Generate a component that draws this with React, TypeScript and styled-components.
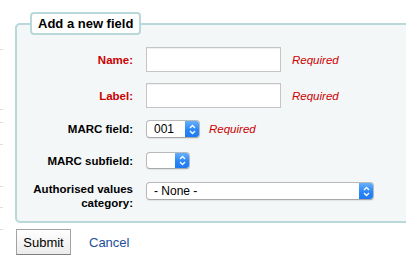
import React from "react";
import styled, { createGlobalStyle } from "styled-components";

const Global = createGlobalStyle`
  html, body { margin: 0; padding: 0; background: #fff; overflow: hidden; }
  body { font-family: "Liberation Sans", Arial, sans-serif; color: #000; }
  * { box-sizing: border-box; }
`;

const Page = styled.div`
  display: flex;
  width: 406px;
  height: 267px;
  overflow: hidden;
`;

const Rail = styled.div`
  width: 3px;
  flex: none;
  display: flex;
  flex-direction: column;
`;

const RailItem = styled.div<{ $h: number }>`
  height: ${(p) => p.$h}px;
  border-bottom: 1px solid #dedede;
  flex: none;
`;

const Main = styled.div`
  padding-left: 12px;
  flex: none;
`;

const Fieldset = styled.fieldset`
  margin: 12px 0 0 0;
  width: 430px;
  padding: 0 0 11px 13px;
  border: 2px solid #b9d8d9;
  border-radius: 5px;
  background: #f3f7f8;
  min-inline-size: 0;
`;

const Legend = styled.legend`
  padding: 2px 6px;
  margin: 0;
  border: 2px solid #b9d8d9;
  border-radius: 4px;
  background: #fff;
  font-size: 13px;
  line-height: 15px;
  font-weight: bold;
  color: #000;
`;

const Rows = styled.div`
  display: flex;
  flex-direction: column;
  padding-top: 12px;
`;

const Row = styled.div<{ $top: number; $align?: string }>`
  display: flex;
  align-items: ${(p) => p.$align || "center"};
  margin-top: ${(p) => p.$top}px;
`;

const Label = styled.label<{ $req?: boolean }>`
  width: 103px;
  margin-right: 13px;
  flex: none;
  text-align: right;
  font-size: 11.5px;
  line-height: 14px;
  font-weight: bold;
  color: ${(p) => (p.$req ? "#cc0000" : "#000")};
`;

const TextInput = styled.input`
  width: 135px;
  height: 25px;
  border: 1px solid #c5c5c5;
  background: #fff;
  box-shadow: inset 0 1px 1px rgba(0, 0, 0, 0.06);
  padding: 2px 4px;
  font: 12px "Liberation Sans", Arial, sans-serif;
  margin: 0;
`;

const Required = styled.span<{ $ml: number }>`
  margin-left: ${(p) => p.$ml}px;
  font-size: 11.5px;
  font-style: italic;
  color: #cc0000;
`;

const SelectBox = styled.div<{ $w: number; $h: number }>`
  width: ${(p) => p.$w}px;
  height: ${(p) => p.$h}px;
  display: flex;
  border: 1px solid #b9b9b9;
  border-bottom-color: #a8a8a8;
  border-radius: 4px;
  background: #fff;
  box-shadow: 0 1px 1px rgba(0, 0, 0, 0.08);
  overflow: hidden;
`;

const SelectText = styled.span`
  flex: 1;
  padding-left: 7px;
  font-size: 12px;
  line-height: 16px;
  color: #000;
  white-space: nowrap;
`;

const SelectArrow = styled.span`
  width: 15px;
  flex: none;
  display: flex;
  align-items: center;
  justify-content: center;
  background: linear-gradient(#6db5fb, #2a86f7 55%, #1b78f2);
  margin: -1px -1px -1px 0;
`;

const Chevrons = () => (
  <svg width="7" height="11" viewBox="0 0 7 11">
    <path d="M1 4 L3.5 1.5 L6 4" fill="none" stroke="#fff" strokeWidth="1.3" />
    <path d="M1 7 L3.5 9.5 L6 7" fill="none" stroke="#fff" strokeWidth="1.3" />
  </svg>
);

const Select = ({ w, h, text }: { w: number; h: number; text: string }) => (
  <SelectBox $w={w} $h={h}>
    <SelectText>{text}</SelectText>
    <SelectArrow>
      <Chevrons />
    </SelectArrow>
  </SelectBox>
);

const Actions = styled.div`
  display: flex;
  align-items: center;
  margin-top: 6px;
`;

const Button = styled.button`
  width: 55px;
  height: 26px;
  margin: 0 0 0 1px;
  padding: 0;
  border: 1px solid #a3a3a3;
  border-bottom-color: #7f7f7f;
  background: linear-gradient(#ffffff, #ececec);
  font: 13px "Liberation Sans", Arial, sans-serif;
  color: #000;
`;

const CancelLink = styled.a`
  margin-left: 18px;
  font-size: 13px;
  color: #1d4d9b;
  text-decoration: none;
`;

const railHeights = [50, 60, 13, 22, 42, 21, 22];

export default function App() {
  return (
    <>
      <Global />
      <Page>
        <Rail>
          {railHeights.map((h, i) => (
            <RailItem key={i} $h={h - (i === 0 ? 0 : 0)} />
          ))}
        </Rail>
        <Main>
          <Fieldset>
            <Legend>Add a new field</Legend>
            <Rows>
              <Row $top={0}>
                <Label $req>Name:</Label>
                <TextInput />
                <Required $ml={11}>Required</Required>
              </Row>
              <Row $top={11}>
                <Label $req>Label:</Label>
                <TextInput />
                <Required $ml={11}>Required</Required>
              </Row>
              <Row $top={12}>
                <Label>MARC field:</Label>
                <Select w={54} h={18} text="001" />
                <Required $ml={9}>Required</Required>
              </Row>
              <Row $top={14}>
                <Label>MARC subfield:</Label>
                <Select w={44} h={17} text="" />
              </Row>
              <Row $top={13} $align="flex-start">
                <Label>
                  Authorised values
                  <br />
                  category:
                </Label>
                <Select w={228} h={18} text="- None -" />
              </Row>
            </Rows>
          </Fieldset>
          <Actions>
            <Button>Submit</Button>
            <CancelLink href="#">Cancel</CancelLink>
          </Actions>
        </Main>
      </Page>
    </>
  );
}
